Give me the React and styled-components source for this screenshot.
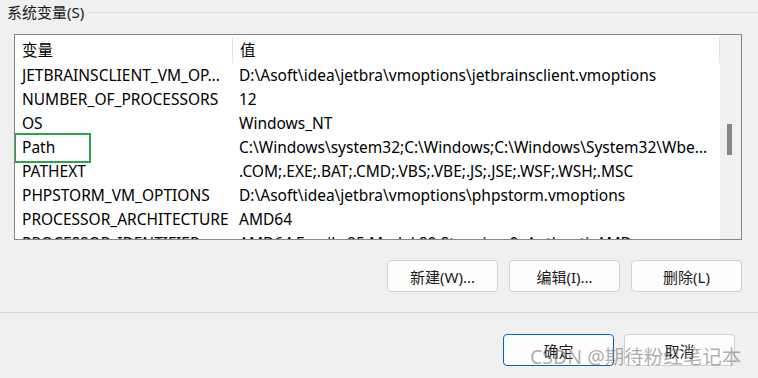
import React from "react";
import styled, { createGlobalStyle } from "styled-components";

const GlobalStyle = createGlobalStyle`
  html, body {
    margin: 0;
    padding: 0;
    background: #f0f0f0;
  }
  body {
    font-family: "Noto Sans", "Noto Sans CJK SC", sans-serif;
  }
`;

const rows = [
  { name: "JETBRAINSCLIENT_VM_OP...", value: "D:\\Asoft\\idea\\jetbra\\vmoptions\\jetbrainsclient.vmoptions" },
  { name: "NUMBER_OF_PROCESSORS", value: "12" },
  { name: "OS", value: "Windows_NT" },
  { name: "Path", value: "C:\\Windows\\system32;C:\\Windows;C:\\Windows\\System32\\Wbe...", marked: true },
  { name: "PATHEXT", value: ".COM;.EXE;.BAT;.CMD;.VBS;.VBE;.JS;.JSE;.WSF;.WSH;.MSC" },
  { name: "PHPSTORM_VM_OPTIONS", value: "D:\\Asoft\\idea\\jetbra\\vmoptions\\phpstorm.vmoptions" },
  { name: "PROCESSOR_ARCHITECTURE", value: "AMD64" },
  { name: "PROCESSOR_IDENTIFIER", value: "AMD64 Family 25 Model 80 Stepping 0, AuthenticAMD" },
];

const App = () => {
  return (
    <Page>
      <GlobalStyle />
      <GroupHeader>
        <GroupLabel>系统变量(S)</GroupLabel>
        <GroupLine />
      </GroupHeader>

      <ListBox>
        <ListBody>
          <HeaderRow>
            <NameCell>变量</NameCell>
            <HeaderDivider />
            <ValueCell>值</ValueCell>
            <HeaderDivider />
          </HeaderRow>
          {rows.map((r) => (
            <Row key={r.name}>
              <NameCell>{r.name}</NameCell>
              <ValueCell>{r.value}</ValueCell>
              {r.marked && <Highlight />}
            </Row>
          ))}
        </ListBody>
        <ScrollTrack>
          <ScrollThumb />
        </ScrollTrack>
      </ListBox>

      <ActionRow>
        <Button>新建(W)...</Button>
        <Button>编辑(I)...</Button>
        <Button>删除(L)</Button>
      </ActionRow>

      <Divider />

      <FooterRow>
        <Button $primary>确定</Button>
        <Button>取消</Button>
      </FooterRow>

      <Watermark>CSDN @期待粉红笔记本</Watermark>
    </Page>
  );
};

export default App;

const Page = styled.div`
  position: relative;
  width: 758px;
  height: 378px;
  overflow: hidden;
  background: #f0f0f0;
  color: #000;
`;

const GroupHeader = styled.div`
  display: flex;
  align-items: center;
  height: 26px;
  padding-left: 7px;
`;

const GroupLabel = styled.span`
  font-size: 15px;
  color: #1a1a1a;
  line-height: 26px;
  margin-top: -3px;
`;

const GroupLine = styled.div`
  flex: 1;
  height: 1px;
  background: #dcdcdc;
  margin-left: 4px;
  margin-top: -2px;
`;

const ListBox = styled.div`
  display: flex;
  margin: 8px 0 0 14px;
  width: 728px;
  height: 206px;
  box-sizing: border-box;
  border: 1px solid #828790;
  background: #fff;
  overflow: hidden;
`;

const ListBody = styled.div`
  flex: 1;
  display: flex;
  flex-direction: column;
  overflow: hidden;
`;

const HeaderRow = styled.div`
  display: flex;
  align-items: center;
  height: 28px;
  flex: none;
  padding-top: 1px;
  box-sizing: border-box;
`;

const HeaderDivider = styled.div`
  width: 1px;
  height: 26px;
  background: #e3e3e3;
  flex: none;
`;

const Row = styled.div`
  position: relative;
  display: flex;
  align-items: center;
  height: 24px;
  flex: none;
`;

const NameCell = styled.div`
  width: 217px;
  flex: none;
  box-sizing: border-box;
  padding-left: 7px;
  font-size: 15.5px;
  white-space: nowrap;
  overflow: hidden;
`;

const ValueCell = styled.div`
  flex: 1;
  min-width: 0;
  box-sizing: border-box;
  padding-left: 7px;
  font-size: 15.5px;
  white-space: nowrap;
  overflow: hidden;
  text-overflow: ellipsis;
`;

const Highlight = styled.div`
  position: absolute;
  left: -1px;
  top: -2px;
  width: 77px;
  height: 30px;
  box-sizing: border-box;
  border: 2px solid #2ba44d;
`;

const ScrollTrack = styled.div`
  width: 21px;
  flex: none;
  background: #f0f0f0;
  position: relative;
`;

const ScrollThumb = styled.div`
  position: absolute;
  left: 7px;
  top: 89px;
  width: 5px;
  height: 31px;
  background: #868686;
`;

const ActionRow = styled.div`
  display: flex;
  justify-content: flex-end;
  gap: 11px;
  margin-top: 20px;
  padding-right: 16px;
`;

const Button = styled.button`
  width: 111px;
  height: 32px;
  box-sizing: border-box;
  background: #fdfdfd;
  border: 1px solid ${(p) => (p.$primary ? "#0067c0" : "#d0d0d0")};
  border-radius: 4px;
  font-family: "Noto Sans", "Noto Sans CJK SC", sans-serif;
  font-size: 15px;
  color: #1a1a1a;
  padding: 0;
`;

const Divider = styled.div`
  height: 1px;
  background: #dadada;
  margin-top: 20px;
`;

const FooterRow = styled.div`
  display: flex;
  justify-content: flex-end;
  gap: 10px;
  margin-top: 21px;
  padding-right: 23px;
`;

const Watermark = styled.div`
  position: absolute;
  left: 530px;
  top: 341px;
  font-size: 19.5px;
  color: rgba(120, 120, 120, 0.6);
  white-space: nowrap;
  pointer-events: none;
`;
